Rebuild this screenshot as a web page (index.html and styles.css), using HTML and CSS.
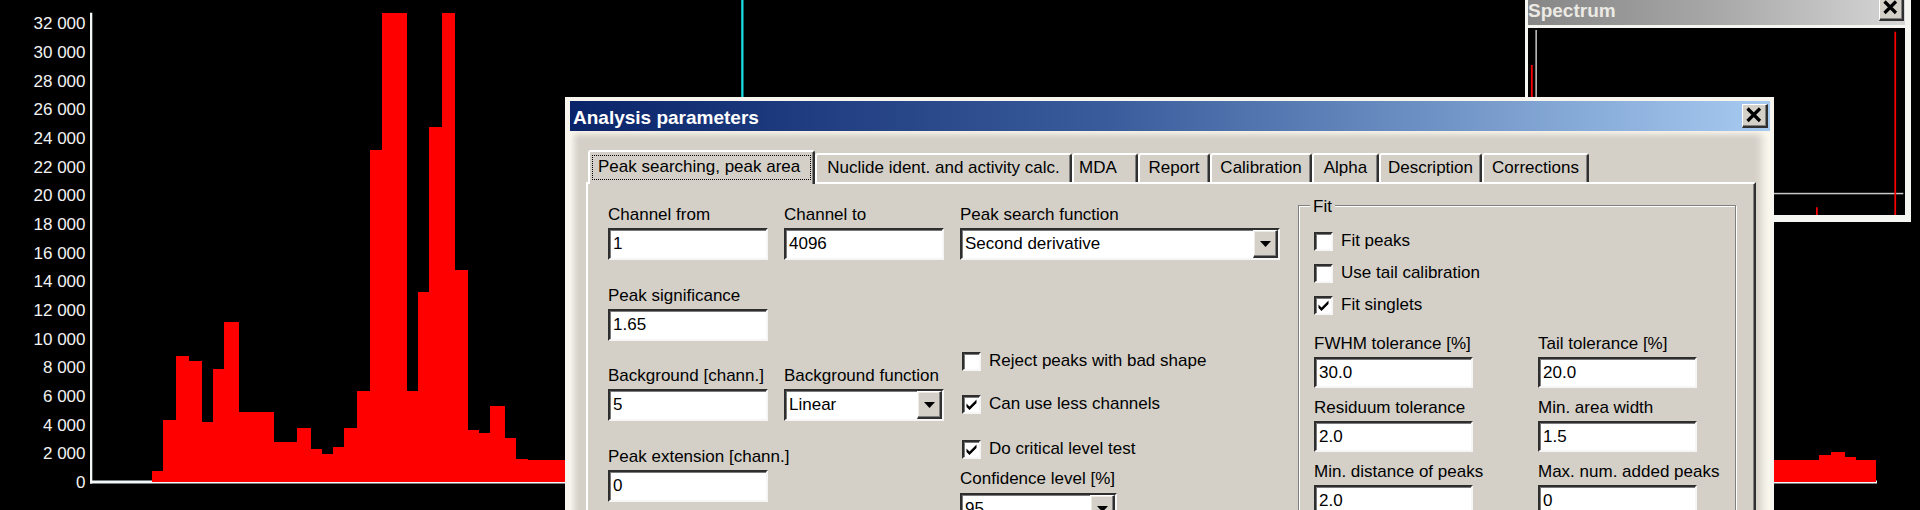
FILE: index.html
```html
<!DOCTYPE html>
<html lang="en">
<head>
<meta charset="utf-8">
<title>Analysis parameters</title>
<link rel="stylesheet" href="styles.css">
</head>
<body>
<div class="desk">
  <svg class="chart" width="1920" height="510" viewBox="0 0 1920 510">
    <g class="ylabels">
      <text x="85.5" y="29.4">32 000</text>
      <text x="85.5" y="58.05">30 000</text>
      <text x="85.5" y="86.7">28 000</text>
      <text x="85.5" y="115.35">26 000</text>
      <text x="85.5" y="144">24 000</text>
      <text x="85.5" y="172.65">22 000</text>
      <text x="85.5" y="201.3">20 000</text>
      <text x="85.5" y="229.95">18 000</text>
      <text x="85.5" y="258.6">16 000</text>
      <text x="85.5" y="287.25">14 000</text>
      <text x="85.5" y="315.9">12 000</text>
      <text x="85.5" y="344.55">10 000</text>
      <text x="85.5" y="373.2">8 000</text>
      <text x="85.5" y="401.85">6 000</text>
      <text x="85.5" y="430.5">4 000</text>
      <text x="85.5" y="459.15">2 000</text>
      <text x="85.5" y="487.8">0</text>
    </g>
    <rect class="axis" x="90" y="12.7" width="2.3" height="470.8"/>
    <rect class="axis" x="90" y="480.5" width="1787" height="3"/>
    <polygon class="bars" points="152,482 152,471 163,471 163,420 176,420 176,356 189,356 189,361 202,361 202,422 213,422 213,369 224,369 224,322 239,322 239,412 274,412 274,442 297,442 297,428 311,428 311,449 322,449 322,454 333,454 333,447 344,447 344,428 357,428 357,391 370,391 370,150 382,150 382,13 407,13 407,391 418,391 418,292 429,292 429,127 442,127 442,13 455,13 455,270 468,270 468,430 479,430 479,433 490,433 490,406 505,406 505,438 516,438 516,459 528,459 528,460 1819,460 1819,455 1831,455 1831,452 1845,452 1845,457 1856,457 1856,460 1876,460 1876,482"/>
    <rect class="cursor" x="741.2" y="0" width="2.3" height="110"/>
  </svg>

  <div class="win spec">
    <div class="caption inactive">
      <span class="title">Spectrum</span>
      <span class="xbtn small"><svg width="21" height="20" viewBox="0 0 21 20"><path d="M4.5 3.5 L16 15 M16 3.5 L4.5 15"/></svg></span>
    </div>
    <div class="spec-view">
      <svg width="377" height="187" viewBox="0 0 377 187">
        <rect class="gline" x="7.4" y="2" width="1.5" height="185"/>
        <rect class="gline" x="8" y="164.8" width="367.3" height="1.5"/>
        <rect class="rline" x="2.9" y="37" width="1.8" height="150"/>
        <rect class="rline" x="366.4" y="3.7" width="1.7" height="183.3"/>
        <rect class="rline" x="288" y="179.3" width="1.7" height="7.7"/>
      </svg>
    </div>
  </div>

  <div class="win dlg">
    <div class="caption active">
      <span class="title">Analysis parameters</span>
      <span class="xbtn"><svg width="22" height="20" viewBox="0 0 22 20"><path d="M4.5 3.5 L17 16 M17 3.5 L4.5 16"/></svg></span>
    </div>
    <div class="dlg-body">
      <div class="tabs">
        <div class="tab sel t-peak"><span class="focus">Peak searching, peak area</span></div>
        <div class="tab t-nuc">Nuclide ident. and activity calc.</div>
        <div class="tab t-mda">MDA</div>
        <div class="tab t-rep">Report</div>
        <div class="tab t-cal">Calibration</div>
        <div class="tab t-alpha">Alpha</div>
        <div class="tab t-desc">Description</div>
        <div class="tab t-corr">Corrections</div>
      </div>
      <div class="panel">
        <div class="grid2">
          <div class="field"><div class="lbl">Channel from</div><div class="edit">1</div></div>
          <div class="field"><div class="lbl">Channel to</div><div class="edit">4096</div></div>
          <div class="field"><div class="lbl">Peak significance</div><div class="edit">1.65</div></div>
          <div class="field empty"></div>
          <div class="field"><div class="lbl">Background [chann.]</div><div class="edit">5</div></div>
          <div class="field"><div class="lbl">Background function</div>
            <div class="combo"><span class="val">Linear</span><span class="drop"><svg width="11" height="6" viewBox="0 0 11 6"><polygon points="0,0 11,0 5.5,6"/></svg></span></div>
          </div>
          <div class="field"><div class="lbl">Peak extension [chann.]</div><div class="edit">0</div></div>
        </div>
        <div class="col3">
          <div class="field"><div class="lbl">Peak search function</div>
            <div class="combo"><span class="val">Second derivative</span><span class="drop"><svg width="11" height="6" viewBox="0 0 11 6"><polygon points="0,0 11,0 5.5,6"/></svg></span></div>
          </div>
          <div class="chk c1"><span class="box"></span><span>Reject peaks with bad shape</span></div>
          <div class="chk c2"><span class="box"><svg width="15" height="15" viewBox="0 0 15 15"><polygon points="2.5,6.5 5.5,9.5 12.5,2.5 12.5,6 5.5,13 2.5,10"/></svg></span><span>Can use less channels</span></div>
          <div class="chk c3"><span class="box"><svg width="15" height="15" viewBox="0 0 15 15"><polygon points="2.5,6.5 5.5,9.5 12.5,2.5 12.5,6 5.5,13 2.5,10"/></svg></span><span>Do critical level test</span></div>
          <div class="field conf"><div class="lbl">Confidence level [%]</div>
            <div class="combo c95"><span class="val">95</span><span class="drop"><svg width="11" height="6" viewBox="0 0 11 6"><polygon points="0,0 11,0 5.5,6"/></svg></span></div>
          </div>
        </div>
        <div class="group">
          <div class="legend">Fit</div>
          <div class="chk g1"><span class="box"></span><span>Fit peaks</span></div>
          <div class="chk g2"><span class="box"></span><span>Use tail calibration</span></div>
          <div class="chk g2"><span class="box"><svg width="15" height="15" viewBox="0 0 15 15"><polygon points="2.5,6.5 5.5,9.5 12.5,2.5 12.5,6 5.5,13 2.5,10"/></svg></span><span>Fit singlets</span></div>
          <div class="gridfit">
            <div class="field"><div class="lbl">FWHM tolerance [%]</div><div class="edit">30.0</div></div>
            <div class="field"><div class="lbl">Tail tolerance [%]</div><div class="edit">20.0</div></div>
            <div class="field"><div class="lbl">Residuum tolerance</div><div class="edit">2.0</div></div>
            <div class="field"><div class="lbl">Min. area width</div><div class="edit">1.5</div></div>
            <div class="field"><div class="lbl">Min. distance of peaks</div><div class="edit">2.0</div></div>
            <div class="field"><div class="lbl">Max. num. added peaks</div><div class="edit">0</div></div>
          </div>
        </div>
      </div>
    </div>
  </div>
</div>
</body>
</html>
```

FILE: styles.css
```css
html, body {
  margin: 0;
  padding: 0;
  width: 1920px;
  height: 510px;
  overflow: hidden;
  background: #000;
}
body {
  font-family: "Liberation Sans", Arial, sans-serif;
  font-size: 17px;
  color: #000;
}
.desk {
  position: relative;
  width: 1920px;
  height: 510px;
  overflow: hidden;
  background: #000;
}
.chart { display: block; }
.ylabels text {
  fill: #f2f2f2;
  font-family: "Liberation Sans", Arial, sans-serif;
  font-size: 17px;
  text-anchor: end;
}
.axis { fill: #f2f8f8; }
.bars { fill: #ff0000; }
.cursor { fill: #1adbe2; }

/* windows */
.win {
  position: absolute;
  box-sizing: border-box;
  display: flex;
  flex-direction: column;
}
.caption {
  flex: none;
  display: flex;
  justify-content: space-between;
}
.caption .title {
  font-weight: bold;
  font-size: 19px;
  line-height: 20px;
  white-space: nowrap;
}
.caption.active {
  height: 30px;
  align-items: center;
  background: linear-gradient(90deg, #0a246a 0%, #3a5c9c 45%, #a6caf0 100%);
}
.caption.active .title {
  color: #fff;
  padding: 3px 0 0 3px;
}
.caption.inactive {
  height: 29px;
  align-items: center;
  background: linear-gradient(90deg, #868686 0%, #a8a8a8 50%, #d6d6d6 100%);
}
.caption.inactive .title {
  color: #eceae4;
  padding: 0;
}

.xbtn {
  box-sizing: border-box;
  width: 26px;
  height: 24px;
  margin-right: 2px;
  background: #d4d0c8;
  border-style: solid;
  border-width: 1px 2px 2px 1px;
  border-color: #ffffff #303030 #303030 #ffffff;
  box-shadow: inset -1px -1px 0 #808080;
  display: flex;
}
.xbtn svg path {
  stroke: #000;
  stroke-width: 3.2;
  fill: none;
}
.xbtn.small {
  width: 25px;
  height: 24px;
  margin-right: 1px;
  align-self: flex-start;
  margin-top: 1px;
}

/* spectrum window */
.spec {
  left: 1525px;
  top: -8px;
  width: 386px;
  height: 230px;
  background: #f5f5f2;
  border-style: solid;
  border-color: #f5f5f2;
  border-width: 4px 6px 7px 3px;
}
.spec-view {
  margin-top: 3px;
  height: 187px;
  background: #000;
}
.spec-view svg { display: block; }
.gline { fill: #c8c8c8; }
.rline { fill: #ff0000; }

/* dialog */
.dlg {
  left: 565px;
  top: 97px;
  width: 1209px;
  height: 430px;
  border-style: solid;
  border-color: #f8f5ee;
  border-width: 4px 4px 0 5px;
  background: #d4d0c8;
}
.dlg-body {
  flex: 1;
  display: flex;
  flex-direction: column;
  box-shadow:
    inset -12px 0 8px -4px #fbf8ef,
    inset 7px 0 6px -3px #fbf8ef,
    inset 0 7px 6px -4px #f8f4ea;
}

.tabs {
  display: flex;
  align-items: flex-end;
  height: 32px;
  margin: 19px 0 0 18px;
}
.tab {
  box-sizing: border-box;
  height: 29px;
  background: #d4d0c8;
  border-style: solid;
  border-width: 2px 2px 0 2px;
  border-color: #ffffff #303030 #d4d0c8 #ffffff;
  border-radius: 3px 3px 0 0;
  box-shadow: inset -1px 0 0 #808080;
  text-align: center;
  line-height: 26px;
  white-space: nowrap;
}
.tab.sel {
  position: relative;
  z-index: 2;
  height: 34px;
  margin-bottom: -2px;
  padding: 3px 2px 4px 2px;
  text-align: left;
}
.focus {
  display: block;
  box-sizing: border-box;
  height: 25px;
  border: 1px dotted #000;
  line-height: 22px;
  padding-left: 5px;
}
.t-peak { width: 227px; }
.t-nuc { width: 257px; }
.t-mda { width: 66px; text-align: left; padding-left: 5px; }
.t-rep { width: 72px; }
.t-cal { width: 102px; }
.t-alpha { width: 67px; }
.t-desc { width: 103px; }
.t-corr { width: 107px; }

.panel {
  flex: 1;
  box-sizing: border-box;
  width: 1170px;
  margin-left: 16px;
  border-style: solid;
  border-width: 2px 2px 0 2px;
  border-color: #ffffff #303030 #ffffff #ffffff;
  box-shadow: inset -1px 0 0 #808080;
  padding: 21px 0 0 20px;
  display: flex;
  align-items: flex-start;
}

.field {
  display: flex;
  flex-direction: column;
}
.lbl {
  line-height: 20px;
  height: 20px;
  white-space: nowrap;
}
.edit, .combo {
  box-sizing: border-box;
  margin-top: 3px;
  height: 32px;
  background: #fff;
  border-style: solid;
  border-width: 2px;
  border-color: #2e2e2e #f6f6f6 #f6f6f6 #2e2e2e;
  box-shadow: inset 1px 1px 0 #7a7a7a;
  line-height: 28px;
  padding-left: 3px;
  white-space: nowrap;
}
.combo {
  display: flex;
  padding-left: 0;
}
.combo .val {
  flex: 1;
  padding-left: 3px;
}
.drop {
  box-sizing: border-box;
  width: 25px;
  height: 28px;
  background: #d4d0c8;
  border-style: solid;
  border-width: 1px 2px 2px 1px;
  border-color: #ffffff #303030 #303030 #ffffff;
  box-shadow: inset -1px -1px 0 #808080, inset 1px 1px 0 #ecebe6;
  display: flex;
  align-items: center;
  justify-content: center;
}
.drop svg polygon { fill: #000; }

.grid2 {
  display: grid;
  grid-template-columns: 160px 160px;
  column-gap: 16px;
  row-gap: 25.5px;
}
.col3 {
  width: 320px;
  margin-left: 16px;
  display: flex;
  flex-direction: column;
}
.chk {
  display: flex;
  align-items: center;
  height: 20px;
  line-height: 20px;
  white-space: nowrap;
}
.box {
  box-sizing: border-box;
  flex: none;
  width: 19px;
  height: 19px;
  margin-right: 8px;
  background: #fff;
  border-style: solid;
  border-width: 2px;
  border-color: #2e2e2e #f6f6f6 #f6f6f6 #2e2e2e;
  box-shadow: inset 1px 1px 0 #7a7a7a;
  display: flex;
}
.box svg polygon { fill: #000; }
.col3 .chk { margin-left: 2px; }
.c1 { margin-top: 91px; }
.c2 { margin-top: 23px; }
.c3 { margin-top: 25px; }
.conf { margin-top: 10px; }
.conf .combo { margin-top: 4px; }
.c95 { width: 157px; }

.group {
  box-sizing: border-box;
  width: 438px;
  height: 340px;
  margin: 0 0 0 18px;
  border: 1px solid #808080;
  box-shadow: inset 1px 1px 0 #ffffff, 1px 1px 0 #ffffff;
  padding: 0 0 0 15px;
}
.legend {
  width: fit-content;
  margin: -9px 0 0 -4px;
  padding: 0 3px;
  background: #d4d0c8;
  line-height: 20px;
}
.g1 { margin-top: 14px; }
.g2 { margin-top: 12px; }
.gridfit {
  margin-top: 19px;
  display: grid;
  grid-template-columns: 159px 159px;
  column-gap: 65px;
  row-gap: 10px;
}
.gridfit .edit { height: 31px; line-height: 27px; }
```
